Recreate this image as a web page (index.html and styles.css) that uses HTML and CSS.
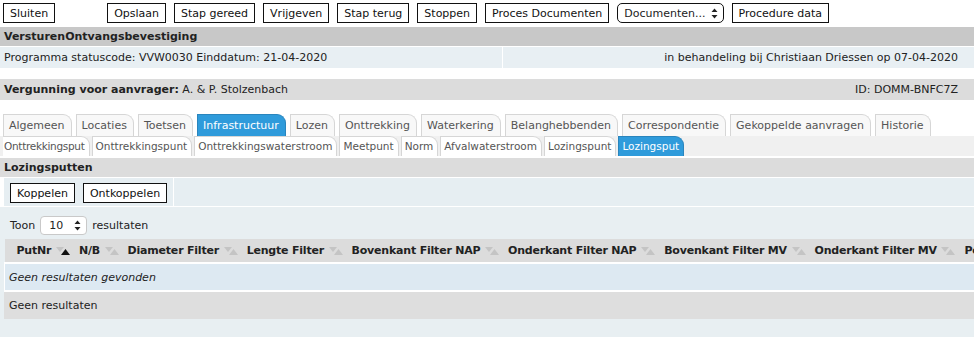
FILE: index.html
```html
<!DOCTYPE html>
<html lang="nl">
<head>
    <meta charset="UTF-8">
    <title>Lozingsputten</title>
    <link rel="stylesheet" href="styles.css">
</head>
<body>
    <div class="toolbar">
        <button class="btn btn-close">Sluiten</button>
        <button class="btn">Opslaan</button>
        <button class="btn">Stap gereed</button>
        <button class="btn">Vrijgeven</button>
        <button class="btn">Stap terug</button>
        <button class="btn">Stoppen</button>
        <button class="btn">Proces Documenten</button>
        <span class="select">Documenten...
            <svg width="7" height="11" viewBox="0 0 7 11"><path d="M3.5 0.5 L6.5 4 H0.5 Z M3.5 10.5 L6.5 7 H0.5 Z" fill="#222"/></svg>
        </span>
        <button class="btn">Procedure data</button>
    </div>

    <div class="panel-title">VersturenOntvangsbevestiging</div>
    <div class="info-row">
        <div class="info-cell">Programma statuscode: VVW0030 Einddatum: 21-04-2020</div>
        <div class="info-cell right">in behandeling bij Christiaan Driessen op 07-04-2020</div>
    </div>

    <div class="applicant">
        <span><b>Vergunning voor aanvrager:</b> A. &amp; P. Stolzenbach</span>
        <span>ID: DOMM-BNFC7Z</span>
    </div>

    <div class="tabs tabs-main">
        <span class="tab">Algemeen</span>
        <span class="tab">Locaties</span>
        <span class="tab">Toetsen</span>
        <span class="tab active">Infrastructuur</span>
        <span class="tab">Lozen</span>
        <span class="tab">Onttrekking</span>
        <span class="tab">Waterkering</span>
        <span class="tab">Belanghebbenden</span>
        <span class="tab">Correspondentie</span>
        <span class="tab">Gekoppelde aanvragen</span>
        <span class="tab">Historie</span>
    </div>
    <div class="tabs tabs-sub">
        <span class="tab first">Onttrekkingsput</span>
        <span class="tab">Onttrekkingspunt</span>
        <span class="tab">Onttrekkingswaterstroom</span>
        <span class="tab">Meetpunt</span>
        <span class="tab">Norm</span>
        <span class="tab">Afvalwaterstroom</span>
        <span class="tab">Lozingspunt</span>
        <span class="tab active">Lozingsput</span>
    </div>

    <div class="section-title">Lozingsputten</div>
    <div class="actions">
        <div class="actions-buttons">
            <button class="btn">Koppelen</button>
            <button class="btn">Ontkoppelen</button>
        </div>
        <div class="actions-rest"></div>
    </div>

    <div class="content">
        <div class="length">
            Toon
            <span class="length-select">10
                <svg width="7" height="11" viewBox="0 0 7 11"><path d="M3.5 0.5 L6.5 4 H0.5 Z M3.5 10.5 L6.5 7 H0.5 Z" fill="#222"/></svg>
            </span>
            resultaten
        </div>

        <div class="table-wrap">
            <table class="grid">
                <thead>
                    <tr>
                        <th>PutNr <svg class="sort" width="14" height="8" viewBox="0 0 14 8"><path d="M0 0 H8 L4 5 Z" fill="#c4c4c4"/><path d="M5 8 H14 L9.5 2 Z" fill="#111"/></svg></th>
                        <th>N/B <svg class="sort" width="14" height="8" viewBox="0 0 14 8"><path d="M0 0 H8 L4 5 Z" fill="#c4c4c4"/><path d="M5 8 H14 L9.5 2 Z" fill="#c4c4c4"/></svg></th>
                        <th>Diameter Filter <svg class="sort" width="14" height="8" viewBox="0 0 14 8"><path d="M0 0 H8 L4 5 Z" fill="#c4c4c4"/><path d="M5 8 H14 L9.5 2 Z" fill="#c4c4c4"/></svg></th>
                        <th>Lengte Filter <svg class="sort" width="14" height="8" viewBox="0 0 14 8"><path d="M0 0 H8 L4 5 Z" fill="#c4c4c4"/><path d="M5 8 H14 L9.5 2 Z" fill="#c4c4c4"/></svg></th>
                        <th>Bovenkant Filter NAP <svg class="sort" width="14" height="8" viewBox="0 0 14 8"><path d="M0 0 H8 L4 5 Z" fill="#c4c4c4"/><path d="M5 8 H14 L9.5 2 Z" fill="#c4c4c4"/></svg></th>
                        <th>Onderkant Filter NAP <svg class="sort" width="14" height="8" viewBox="0 0 14 8"><path d="M0 0 H8 L4 5 Z" fill="#c4c4c4"/><path d="M5 8 H14 L9.5 2 Z" fill="#c4c4c4"/></svg></th>
                        <th>Bovenkant Filter MV <svg class="sort" width="14" height="8" viewBox="0 0 14 8"><path d="M0 0 H8 L4 5 Z" fill="#c4c4c4"/><path d="M5 8 H14 L9.5 2 Z" fill="#c4c4c4"/></svg></th>
                        <th>Onderkant Filter MV <svg class="sort" width="14" height="8" viewBox="0 0 14 8"><path d="M0 0 H8 L4 5 Z" fill="#c4c4c4"/><path d="M5 8 H14 L9.5 2 Z" fill="#c4c4c4"/></svg></th>
                        <th>Po</th>
                    </tr>
                </thead>
                <tbody>
                    <tr class="empty"><td colspan="9">Geen resultaten gevonden</td></tr>
                </tbody>
            </table>
        </div>
        <div class="info-footer">Geen resultaten</div>
    </div>
</body>
</html>
```

FILE: styles.css
```css
body {
    margin: 0;
    font-family: 'DejaVu Sans', Verdana, sans-serif;
    font-size: 11px;
    color: #222;
    background: #fff;
    overflow: hidden;
}
.toolbar {
    display: flex;
    align-items: center;
    gap: 8px;
    padding: 3px 3px 0;
    height: 20px;
}
.btn {
    font-family: inherit;
    font-size: 11px;
    color: #111;
    background: #fff;
    border: 1px solid #111;
    border-radius: 0;
    height: 20px;
    padding: 0 6px;
    margin: 0;
    cursor: pointer;
}
.btn-close {
    margin-right: 44px;
}
.select {
    display: inline-flex;
    align-items: center;
    gap: 5px;
    height: 18px;
    padding: 0 5px 0 6px;
    border: 1px solid #111;
    border-radius: 5px;
    background: #fff;
}
.panel-title {
    margin-top: 4px;
    background: #c8c8c8;
    font-weight: bold;
    padding: 0 4px;
    height: 19px;
    line-height: 19px;
    border-bottom: 1px solid #fff;
}
.info-row {
    display: grid;
    grid-template-columns: 502px 1fr;
    gap: 1px;
    height: 21px;
}
.info-cell {
    background: #e8eff3;
    line-height: 21px;
    padding: 0 4px;
}
.info-cell.right {
    text-align: right;
    padding-right: 16px;
}
.applicant {
    margin-top: 11px;
    background: #dcdcdc;
    height: 21px;
    line-height: 21px;
    padding: 0 16px 0 4px;
    display: flex;
    justify-content: space-between;
}
.tabs {
    display: flex;
    padding-left: 3px;
}
.tabs-main {
    margin-top: 14px;
    gap: 4px;
    height: 22px;
}
.tabs-sub {
    background: #f0f0f0;
    gap: 2px;
    height: 20px;
}
.tab {
    display: block;
    color: #555;
    background: #f8f8f8;
    border: 1px solid #d6d6d6;
    border-bottom: none;
    border-top-right-radius: 9px;
    white-space: nowrap;
}
.tabs-main .tab {
    padding: 0 6px 0 5px;
    line-height: 21px;
}
.tabs-sub .tab {
    font-size: 10.5px;
    padding: 0 4px 0 3px;
    line-height: 19px;
    background: #fff;
}
.tabs-sub .tab.first {
    padding-left: 1px;
    border-left: none;
    letter-spacing: -0.3px;
}
.tab.active {
    background: #2f9bdb;
    color: #fff;
    border-color: #2a85bd;
}
.section-title {
    margin-top: 2px;
    background: #dcdcdc;
    font-weight: bold;
    padding: 0 4px;
    height: 19px;
    line-height: 19px;
    border-bottom: 1px solid #fff;
}
.actions {
    display: grid;
    grid-template-columns: 169px 1fr;
    gap: 1px;
    padding-left: 4px;
    border-bottom: 1px solid #fff;
    background: #fff;
}
.actions-buttons {
    display: flex;
    gap: 8px;
    padding: 5px 5px 3px 6px;
    background: #e6eef2;
}
.actions-rest {
    background: #e6eef2;
}
.content {
    background: #e8eff2;
    padding: 9px 0 40px 4px;
    height: 200px;
}
.length {
    display: flex;
    align-items: center;
    gap: 5px;
    padding-left: 6px;
    height: 18px;
}
.length-select {
    display: inline-flex;
    align-items: center;
    gap: 11px;
    height: 17px;
    padding: 0 5px 0 8px;
    background: #fff;
    border: 1px solid #c9c9c9;
    border-radius: 4px;
}
.table-wrap {
    margin-top: 5px;
    overflow: hidden;
}
.grid {
    border-collapse: collapse;
    white-space: nowrap;
}
.grid th {
    background: #dcdcdc;
    text-align: left;
    font-weight: bold;
    letter-spacing: -0.2px;
    height: 23px;
    padding: 0 0 0 9px;
    border-bottom: 2px solid #fff;
}
.grid th:first-child {
    padding-left: 12px;
}
.grid th:last-child {
    width: 100%;
}
.sort {
    vertical-align: -1px;
    margin-left: 1px;
}
.grid td {
    background: #dde9f2;
    font-style: italic;
    height: 26px;
    padding: 0 4px;
    border-left: 1px solid #fff;
    border-bottom: 2px solid #fff;
}
.info-footer {
    background: #dedede;
    height: 27px;
    line-height: 27px;
    padding-left: 5px;
}
```
